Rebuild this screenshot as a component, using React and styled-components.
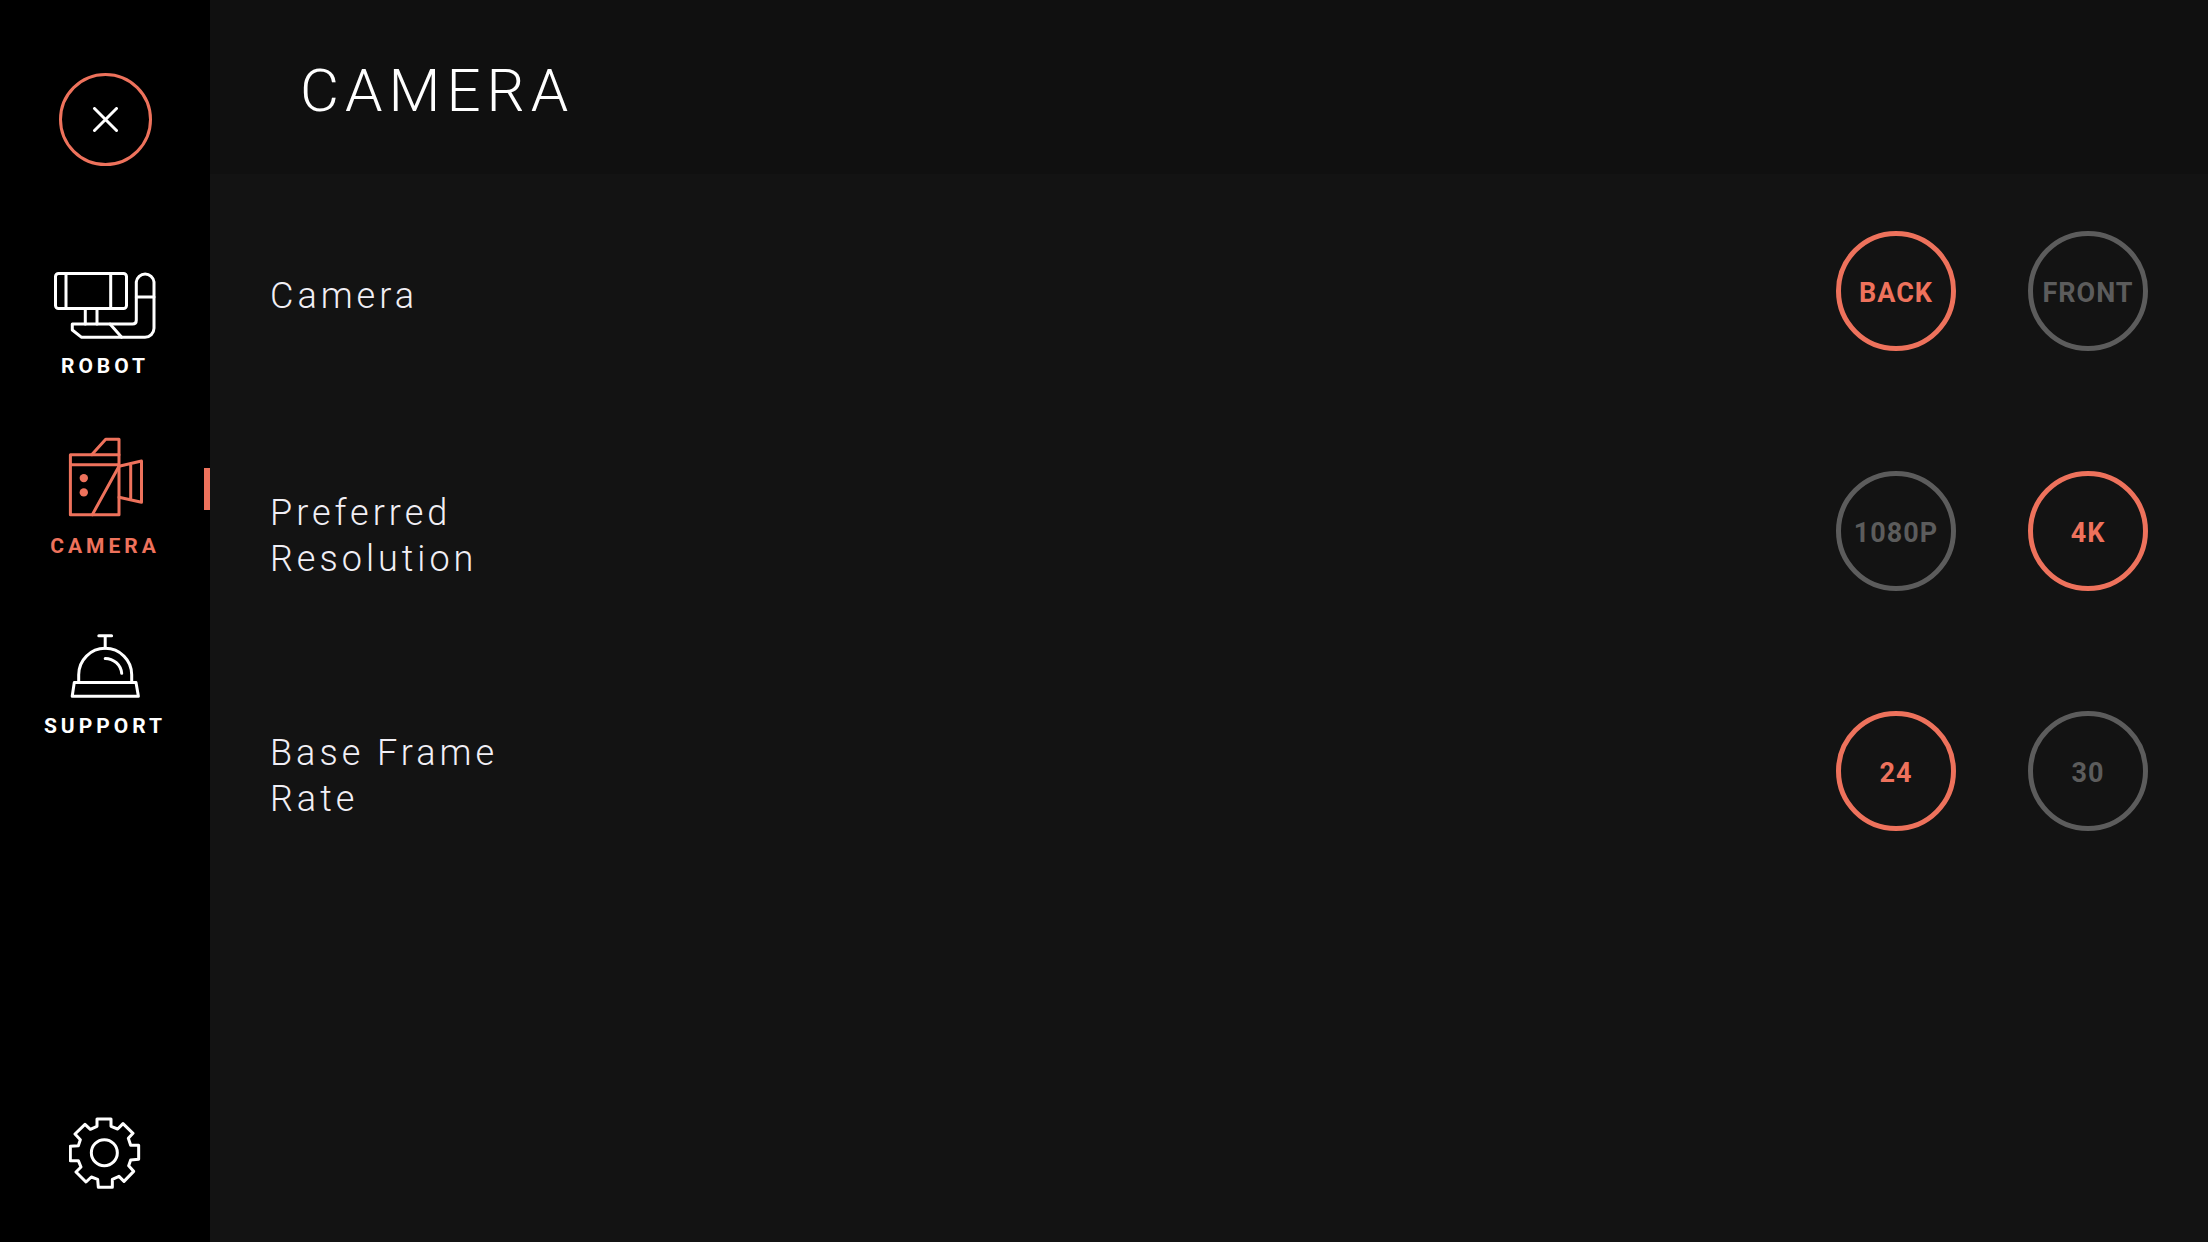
import React, { useState } from 'react'
import styled, { createGlobalStyle } from 'styled-components'

const RobotIcon = () => (
  <Icon viewBox="0 0 104 85" aria-hidden="true">
    <rect x="2.5" y="18.5" width="71" height="35" rx="3" />
    <path d="M13 18.5V53.5M57.7 18.5V53.5M32.3 54V69M44 54V69" />
    <path d="M19.3 69H79.5Q83.3 69 83.3 65.2V27A8.9 8.9 0 0 1 101 27V73.3A9 9 0 0 1 92 82.2H28.3L19.3 75Z" />
    <path d="M83.3 42H101M57 69L68.7 82.2" />
  </Icon>
)

const CameraIcon = () => (
  <Icon viewBox="0 0 104 85" aria-hidden="true">
    <path d="M17.4 19.7H66V79.7H17.4ZM17.4 29.7H66" />
    <path d="M38.7 19.7L52.7 4.2H66V19.7M39.3 79.7L66 31.3" />
    <path d="M66 31.3L88.5 26V67.3L66 62.3M77.7 29V64.5" />
    <Dot cx="30.8" cy="43.1" r="4.2" />
    <Dot cx="30.8" cy="57.4" r="4.2" />
  </Icon>
)

const SupportIcon = () => (
  <Icon viewBox="0 0 104 85" aria-hidden="true">
    <path d="M45.8 20.8H58.6M52.2 20.8V33" />
    <path d="M25.7 67.3V59.8A26.5 26.5 0 0 1 78.7 59.8V67.3" />
    <path d="M52.2 43.4A16.6 16.6 0 0 1 68.7 58.3" />
    <path d="M21.3 67.4H83L85.4 81.3H19.2Z" />
  </Icon>
)

const GearIcon = () => (
  <Gear viewBox="87 51 216 216" aria-hidden="true">
    <path d="M171 57H213V79L233 87L249 71L279 100L265 115L272 136H296V178L272 180L266 197L281 214L252 244L237 229L217 238V262H175L173 238L154 231L138 246L108 216L123 201L115 182H91V139L115 137L121 119L105 102L135 73L151 88L171 79Z" />
    <circle cx="193" cy="158" r="39" />
  </Gear>
)

const menus = [
  { id: 'robot', name: 'ROBOT', icon: <RobotIcon /> },
  { id: 'camera', name: 'CAMERA', icon: <CameraIcon /> },
  { id: 'support', name: 'SUPPORT', icon: <SupportIcon /> },
]

const settings = [
  { id: 'camera', name: 'Camera', options: ['BACK', 'FRONT'] },
  { id: 'resolution', name: 'Preferred Resolution', options: ['1080P', '4K'] },
  { id: 'frameRate', name: 'Base Frame Rate', options: ['24', '30'] },
]

const App = () => {
  const [menu, setMenu] = useState('camera')
  const [values, setValues] = useState({ camera: 'BACK', resolution: '4K', frameRate: '24' })

  return (
    <Page>
      <GlobalStyle />
      <Sidebar>
        <CloseButton aria-label="Close">
          <Cross viewBox="0 0 26 26" aria-hidden="true">
            <path d="M2.5 1.5L24.5 23.5M24.5 1.5L2.5 23.5" />
          </Cross>
        </CloseButton>
        <Menu>
          {menus.map((item) => (
            <MenuButton key={item.id} $active={menu === item.id} onClick={() => setMenu(item.id)}>
              {item.icon}
              <MenuName>{item.name}</MenuName>
            </MenuButton>
          ))}
        </Menu>
        <GearButton aria-label="Settings">
          <GearIcon />
        </GearButton>
      </Sidebar>
      <Main>
        <Header>
          <Title>CAMERA</Title>
        </Header>
        <Settings>
          {settings.map((item) => (
            <Row key={item.id} role="group" aria-labelledby={item.id}>
              <RowName id={item.id}>{item.name}</RowName>
              <Options>
                {item.options.map((option) => (
                  <Option
                    key={option}
                    $active={values[item.id] === option}
                    aria-pressed={values[item.id] === option}
                    onClick={() => setValues({ ...values, [item.id]: option })}
                  >
                    {option}
                  </Option>
                ))}
              </Options>
            </Row>
          ))}
        </Settings>
      </Main>
    </Page>
  )
}

export default App

const GlobalStyle = createGlobalStyle`
  * {
    box-sizing: border-box;
  }
  body {
    margin: 0;
    background: #131313;
    font-family: Roboto, "Liberation Sans", sans-serif;
  }
  button {
    padding: 0;
    border: none;
    background: none;
    color: inherit;
    font-family: inherit;
    cursor: pointer;
  }
`
const Page = styled.div`
  display: flex;
  min-height: 100vh;
  color: #ffffff;
`
const Sidebar = styled.aside`
  display: flex;
  flex-direction: column;
  align-items: center;
  flex-shrink: 0;
  width: 210px;
  padding: 73px 0 53px;
  background: #000000;
`
const CloseButton = styled.button`
  display: flex;
  align-items: center;
  justify-content: center;
  width: 93px;
  height: 93px;
  && {
    border: 3px solid #ee725c;
  }
  border-radius: 50%;
`
const Cross = styled.svg`
  width: 26px;
  height: 26px;
  fill: none;
  stroke: currentColor;
  stroke-width: 3;
  stroke-linecap: round;
`
const Menu = styled.nav`
  display: flex;
  flex-direction: column;
  width: 100%;
  margin: 53px 0 auto;
`
const MenuButton = styled.button`
  position: relative;
  display: flex;
  flex-direction: column;
  align-items: center;
  height: 180px;
  && {
    padding-top: 36px;
    color: ${({ $active }) => ($active ? '#ee725c' : '#ffffff')};
  }
  &::after {
    content: "";
    display: ${({ $active }) => ($active ? 'block' : 'none')};
    position: absolute;
    top: 69px;
    right: 0;
    width: 6px;
    height: 42px;
    background: #ee725c;
  }
`
const Icon = styled.svg`
  width: 104px;
  height: 85px;
  fill: none;
  stroke: currentColor;
  stroke-width: 3;
  stroke-linejoin: round;
  stroke-linecap: round;
`
const Dot = styled.circle`
  fill: currentColor;
  stroke: none;
`
const MenuName = styled.span`
  margin-top: 14px;
  font-weight: 700;
  font-size: 21px;
  line-height: 24px;
  letter-spacing: 4px;
`
const GearButton = styled.button`
  display: flex;
`
const Gear = styled.svg`
  width: 72px;
  height: 72px;
  fill: none;
  stroke: currentColor;
  stroke-width: 9;
  stroke-linejoin: round;
`
const Main = styled.main`
  flex: 1;
  min-width: 0;
`
const Header = styled.header`
  display: flex;
  align-items: center;
  height: 174px;
  padding: 8px 90px 0;
  background: #101010;
`
const Title = styled.h1`
  margin: 0;
  font-weight: 300;
  font-size: 60px;
  line-height: 72px;
  letter-spacing: 6px;
`
const Settings = styled.section`
  display: flex;
  flex-direction: column;
  gap: 120px;
  padding: 57px 60px;
`
const Row = styled.div`
  display: flex;
  align-items: center;
  justify-content: space-between;
  min-height: 120px;
`
const RowName = styled.div`
  max-width: 260px;
  padding-top: 10px;
  font-weight: 300;
  font-size: 36px;
  line-height: 46px;
  letter-spacing: 4px;
  color: #f1eff5;
`
const Options = styled.div`
  display: flex;
  gap: 72px;
`
const Option = styled.button`
  display: flex;
  align-items: center;
  justify-content: center;
  width: 120px;
  height: 120px;
  && {
    padding-top: 4px;
    border: 5px solid;
    color: ${({ $active }) => ($active ? '#ee725c' : '#5c5c5c')};
  }
  border-radius: 50%;
  font-weight: 700;
  font-size: 27px;
  line-height: 32px;
  letter-spacing: 1px;
`
